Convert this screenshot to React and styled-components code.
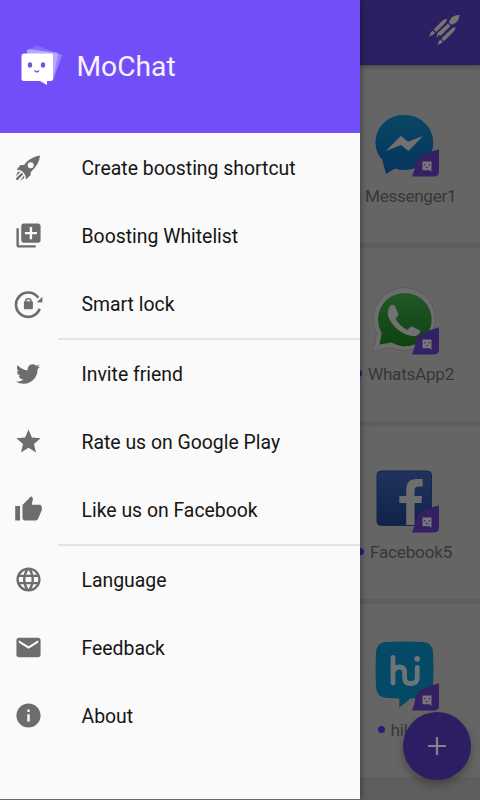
import React from "react";
import styled, { createGlobalStyle } from "styled-components";
import { MdLibraryAdd, MdStar, MdThumbUp, MdLanguage, MdEmail, MdInfo } from "react-icons/md";
import { FaTwitter } from "react-icons/fa";

const GlobalStyle = createGlobalStyle`
  * { box-sizing: border-box; }
  body { margin: 0; overflow: hidden; }
`;

const Screen = styled.div`
  position: relative;
  display: flex;
  width: 480px;
  height: 800px;
  overflow: hidden;
  background: #5e5e5e;
  font-family: Roboto, "Noto Sans", sans-serif;
`;

const Drawer = styled.aside`
  width: 360px;
  flex: none;
  background: #fafafa;
  border-bottom: 1px solid #6b6b6b;
  z-index: 1;
  box-shadow: 0 0 7px rgba(0, 0, 0, 0.5);
`;

const DrawerHeader = styled.header`
  display: flex;
  align-items: center;
  height: 133px;
  padding-left: 20px;
  margin-bottom: 1px;
  background: #724ef9;
`;

const Brand = styled.h1`
  margin: 0 0 0 12.5px;
  color: #f5f2ff;
  font-size: 28.2px;
  font-weight: 400;
  line-height: 36px;
`;

const Group = styled.nav`
  display: flex;
  flex-direction: column;
`;

const Divider = styled.hr`
  height: 2px;
  margin: 0 0 0 58px;
  border: 0;
  background: #e4e4e4;
`;

const MenuRow = styled.div`
  display: flex;
  align-items: center;
  height: 68px;
  color: #151515;
  font-size: 19.4px;
`;

const IconSlot = styled.span`
  display: flex;
  align-items: center;
  justify-content: center;
  width: 56px;
  margin-right: 25.5px;
  padding: 0 0 1px 0;
  flex: none;
  color: #6d6d6d;
`;

const Backdrop = styled.main`
  display: flex;
  flex-direction: column;
  gap: 5px;
  flex: 1;
  min-width: 0;
`;

const Toolbar = styled.div`
  display: flex;
  justify-content: flex-end;
  height: 65px;
  padding: 14px 19px 0 0;
  background: #2d1f63;
  box-shadow: 0 1px 2px rgba(0, 0, 0, 0.25);
`;

const Tile = styled.section`
  height: 173px;
  flex: none;
  padding: 36px 0 0 10px;
  background: #656565;
`;

const TileLabel = styled.div`
  display: flex;
  align-items: center;
  height: 27px;
  margin-left: ${(p) => p.$offset}px;
  color: #373737;
  font-size: 17.2px;
  letter-spacing: ${(p) => p.$spacing || 0}px;
  white-space: nowrap;
`;

const Dot = styled.i`
  width: 7px;
  height: 7px;
  margin-right: 6px;
  border-radius: 50%;
  background: #2f1b7b;
`;

const AppArt = styled.svg`
  display: block;
  width: 72px;
  height: 76px;
`;

const AddButton = styled.button`
  position: absolute;
  left: 403px;
  top: 712px;
  display: grid;
  place-items: center;
  width: 68px;
  height: 68px;
  padding: 0;
  border: 0;
  border-radius: 50%;
  background: #2d1e64;
  box-shadow: 0 5px 8px rgba(0, 0, 0, 0.28);
`;

const Logo = () => (
  <svg width="44" height="44" viewBox="20 44.5 44 44">
    <path d="M27 50 37 45 63 55 52 80 45 76Z" fill="#fff" opacity=".16" />
    <path d="M26 52 29 48 61 54 54 79 44 78Z" fill="#fff" opacity=".18" />
    <path d="M27 49 58 52 53 80 27 75Z" fill="#fff" opacity=".3" />
    <path d="M24 53H51Q53 53 53 55V78Q53 80.5 50.5 80.5H47V84.5L40 80.5H24Q21.5 80.5 21.5 78V55.5Q21.5 53 24 53Z" fill="#fff" />
    <ellipse cx="30" cy="64.5" rx="2.2" ry="2.7" fill="#7151e8" />
    <ellipse cx="43" cy="64.5" rx="2.2" ry="2.7" fill="#7151e8" />
    <path d="M34.5 70Q36.7 72.7 39 70" fill="none" stroke="#7151e8" strokeWidth="1.2" />
  </svg>
);

const RocketIcon = () => (
  <svg width="28" height="28" viewBox="14 153.5 28 28" fill="currentColor">
    <path fillRule="evenodd" d="M40 155Q33 156 27 161L24 164.5H20.5L16.5 169.5 19.5 169.5 22 170.5 24.5 173.5 25.5 175.5 26 179 30.7 174.5V171.7L35 167Q39.5 161 40 155ZM30.7 161.7A3 3 0 1 1 30.7 167.7A3 3 0 1 1 30.7 161.7Z" />
    <path d="M17.6 171.5 20.5 171 16 176ZM21.5 172.2 23.2 173.8 17.3 180 15.6 178.3ZM24 175 24.3 177.6 20 180.4Z" />
  </svg>
);

const SmartLockIcon = () => (
  <svg width="30" height="30" viewBox="13 288.5 30 30">
    <path d="M38.3 297.3A12.2 12.2 0 1 0 39.7 308.3" fill="none" stroke="currentColor" strokeWidth="2.6" />
    <path d="M42.4 296.2V302L36.8 301.8Z" fill="currentColor" />
    <rect x="23.9" y="300.8" width="9" height="8" rx="1" fill="currentColor" />
    <path d="M25.8 302V300.5Q25.8 298.3 28.4 298.3T31 300.5V302" fill="none" stroke="currentColor" strokeWidth="1.5" />
  </svg>
);

const BoostIcon = () => (
  <svg width="32" height="32" viewBox="429 14 32 32" fill="#777572">
    <path d="M459.4 15Q454 14.7 450.3 19.2L449 22.5 451.2 24.8 455 23.3Q459.5 20 459.4 15Z" />
    <path d="M448 23.5 450.5 26 444.5 32 441 35.5 438.5 35 437.5 37.5 436.8 36.5 437.6 33Z" />
    <path d="M447 19Q443.5 18.8 441 22L433.7 29.4 436.2 32 444.7 23.6Q447 21.5 447 19ZM432.5 30.5 435 33 433 34.8 429.2 36.5 430.7 32.5Z" />
    <path d="M455.6 27.3Q452.5 27 450.2 30L441.5 38.5 444 41.2 452.5 32.7Q455.8 30 455.6 27.3ZM440.5 39.5 443 42 441 43.6 437.5 45 438.8 41.2Z" />
  </svg>
);

const CloneBadge = () => (
  <g>
    <path d="M69 43.3V65.5Q69 70.5 64 70.5H42C43.5 66 45 63.5 45 60Q45.5 54 51.5 49.7Q59 46 69 43.3Z" fill="#342163" />
    <path d="M52.5 55.5H61.5V65.8L59.5 64.3H52.5Z" fill="#79747e" />
    <circle cx="54.8" cy="58.8" r=".8" fill="#392557" />
    <circle cx="59.4" cy="58.8" r=".8" fill="#392557" />
    <path d="M55.7 61.2Q57 62.3 58.4 61.2" fill="none" stroke="#392557" strokeWidth=".8" />
  </g>
);

const MessengerArt = () => (
  <g>
    <linearGradient id="msg" x1="0" y1="0" x2="0" y2="1">
      <stop offset="0" stopColor="#094664" />
      <stop offset="1" stopColor="#07345f" />
    </linearGradient>
    <path d="M34.5 9C18 9 5.7 21 5.7 36.5C5.7 45 9.4 51.5 15.5 56.5" fill="url(#msg)" />
    <path d="M34.5 9C18 9 5.7 21 5.7 36.5C5.7 44 8.5 49.5 12 53L16 68L25.2 62.5Q29.5 64 34.5 64C50.5 64 63.3 52 63.3 36.5S50.5 9 34.5 9Z" fill="url(#msg)" />
    <path d="M15.8 45 31 29.7 38 35.7 53 30 38.5 45 31 39Z" fill="#717171" />
  </g>
);

const WhatsAppArt = () => (
  <g>
    <linearGradient id="wa" x1="0" y1="0" x2="0" y2="1">
      <stop offset="0" stopColor="#225727" />
      <stop offset="1" stopColor="#0c430f" />
    </linearGradient>
    <path d="M35 3.5A31.5 31.5 0 0 0 6.5 49L2.8 67.5 20.5 63.5A31.5 31.5 0 1 0 35 3.5Z" fill="#6d6d6d" stroke="#5b555b" strokeWidth=".8" />
    <path d="M34.7 9A26.6 26.6 0 0 0 11.7 49L9.6 60.5 21.5 58.5A26.6 26.6 0 1 0 34.7 9Z" fill="url(#wa)" />
    <path d="M20 22Q22 20 24.5 21.3L28.3 29.7Q28.7 31 25.6 34.6Q29.5 42.5 37.6 46L41.2 42.2 49.5 46Q50.7 47 49.8 49Q47.2 52.7 42.4 52Q26.5 49.5 18.8 34Q16.5 27 20 22Z" fill="#717171" />
  </g>
);

const FacebookArt = () => (
  <g>
    <linearGradient id="fb" x1="0" y1="0" x2="0" y2="1">
      <stop offset="0" stopColor="#20335e" />
      <stop offset="1" stopColor="#10234b" />
    </linearGradient>
    <rect x="7" y="9" width="54.5" height="54.5" rx="4" fill="url(#fb)" stroke="#182849" />
    <path d="M36.2 63V41H29.3V34H36.2V28Q36.2 17 46.5 17H52.7V24.5H48.5Q44.6 24.5 44.6 28.5V34H52L51.5 41H44.6V63Z" fill="#6d6d6d" />
  </g>
);

const HikeArt = () => (
  <g>
    <path d="M16 2Q34.5.8 53 2Q62.3 2.5 63 12Q64 30 63 47Q62.3 57 53 57.8L40 58.6Q35 64 29.3 67.5V58.6L16 57.8Q6.5 57 6 47Q5 30 6 12Q6.7 2.5 16 2Z" fill="#044965" />
    <path d="M23 17.5V43M23 32.5Q24 27 29.2 27Q34.6 27 34.6 32.5V38Q34.6 43.5 40.5 43.5Q47.2 43.5 47.2 38V27.3" fill="none" stroke="#6d7476" strokeWidth="4.8" strokeLinecap="round" strokeLinejoin="round" />
    <circle cx="47.2" cy="18.8" r="2.9" fill="#6d7476" />
  </g>
);

const sections = [
  [
    { label: "Create boosting shortcut", icon: <RocketIcon /> },
    { label: "Boosting Whitelist", icon: <MdLibraryAdd size={29} /> },
    { label: "Smart lock", icon: <SmartLockIcon /> },
  ],
  [
    { label: "Invite friend", icon: <FaTwitter size={24} /> },
    { label: "Rate us on Google Play", icon: <MdStar size={29} /> },
    { label: "Like us on Facebook", icon: <MdThumbUp size={29} /> },
  ],
  [
    { label: "Language", icon: <MdLanguage size={29} /> },
    { label: "Feedback", icon: <MdEmail size={29} /> },
    { label: "About", icon: <MdInfo size={29} /> },
  ],
];

const apps = [
  { label: "Messenger1", art: <MessengerArt />, offset: -5, spacing: -0.35, dot: false },
  { label: "WhatsApp2", art: <WhatsAppArt />, offset: -15, spacing: -0.3, dot: true },
  { label: "Facebook5", art: <FacebookArt />, offset: -13, spacing: -0.25, dot: true },
  { label: "hike6", art: <HikeArt />, offset: 7.5, spacing: -0.2, dot: true },
];

export default function App() {
  return (
    <Screen>
      <GlobalStyle />
      <Drawer>
        <DrawerHeader>
          <Logo />
          <Brand>MoChat</Brand>
        </DrawerHeader>
        {sections.map((items, index) => (
          <React.Fragment key={index}>
            {index > 0 && <Divider />}
            <Group>
              {items.map((item) => (
                <MenuRow key={item.label}>
                  <IconSlot>{item.icon}</IconSlot>
                  {item.label}
                </MenuRow>
              ))}
            </Group>
          </React.Fragment>
        ))}
      </Drawer>
      <Backdrop>
        <Toolbar>
          <BoostIcon />
        </Toolbar>
        {apps.map((app) => (
          <Tile key={app.label}>
            <AppArt viewBox="0 0 72 76">
              {app.art}
              <CloneBadge />
            </AppArt>
            <TileLabel $offset={app.offset} $spacing={app.spacing}>
              {app.dot && <Dot />}
              {app.label}
            </TileLabel>
          </Tile>
        ))}
      </Backdrop>
      <AddButton aria-label="Add">
        <svg width="18" height="18" viewBox="0 0 18 18">
          <path d="M9 0V18M0 9H18" stroke="#85838a" strokeWidth="2.2" />
        </svg>
      </AddButton>
    </Screen>
  );
}
